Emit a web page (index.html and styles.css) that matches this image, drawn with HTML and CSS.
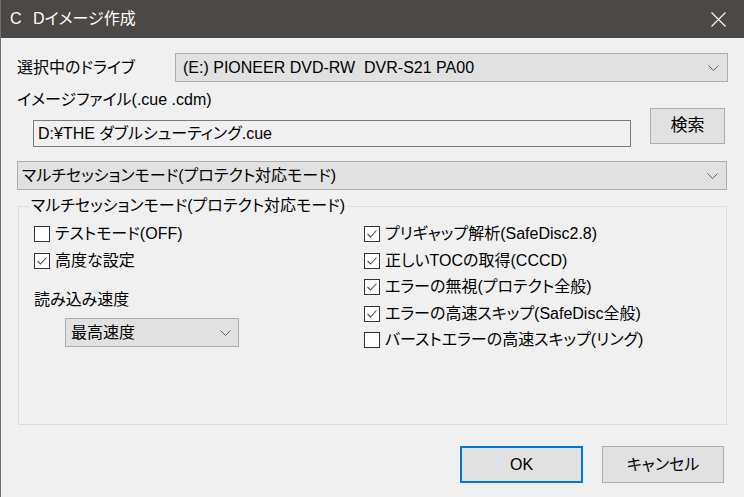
FILE: index.html
```html
<!DOCTYPE html>
<html lang="ja">
<head>
  <meta charset="UTF-8" />
  <title>CDイメージ作成</title>
  <link rel="stylesheet" href="styles.css">
</head>
<body>
  <div class="window">
    <div class="titlebar">
      <span class="title">C Dイメージ作成</span>
      <svg class="close" width="15" height="15" viewBox="0 0 15 15">
        <path d="M0.5 0.5 L14.5 14.5 M14.5 0.5 L0.5 14.5" stroke="#fff" stroke-width="1.1" fill="none"/>
      </svg>
    </div>

    <div class="content">
      <!-- drive -->
      <div class="drive-row">
        <span class="label drive-label">選択中のドライブ</span>
        <div class="combo drive-combo">
          <span class="combo-text">(E:) PIONEER DVD-RW  DVR-S21 PA00</span>
          <svg class="chevron" width="11" height="6" viewBox="0 0 11 6"><path d="M0.5 0.5 L5.5 5.5 L10.5 0.5" stroke="#606060" fill="none"/></svg>
        </div>
      </div>

      <!-- image file -->
      <div class="file-row">
        <div class="file-col">
          <div class="label">イメージファイル(.cue .cdm)</div>
          <div class="textbox">D:¥THE ダブルシューティング.cue</div>
        </div>
        <div class="btn search-btn">検索</div>
      </div>

      <div class="combo mode-combo">
        <span class="combo-text">マルチセッションモード(プロテクト対応モード)</span>
        <svg class="chevron" width="11" height="6" viewBox="0 0 11 6"><path d="M0.5 0.5 L5.5 5.5 L10.5 0.5" stroke="#606060" fill="none"/></svg>
      </div>

      <!-- group box -->
      <div class="group">
        <div class="group-title">マルチセッションモード(プロテクト対応モード)</div>
        <div class="group-cols">
          <div class="col-left">
            <div class="check"><span class="box"></span>テストモード(OFF)</div>
            <div class="check"><span class="box"><svg width="14" height="14" viewBox="0 0 14 14"><path d="M2.5 7 L5.5 10 L11.5 3.5" stroke="#4a4a4a" stroke-width="1.1" fill="none"/></svg></span>高度な設定</div>
            <div class="label speed-label">読み込み速度</div>
            <div class="combo speed-combo">
              <span class="combo-text">最高速度</span>
              <svg class="chevron" width="11" height="6" viewBox="0 0 11 6"><path d="M0.5 0.5 L5.5 5.5 L10.5 0.5" stroke="#606060" fill="none"/></svg>
            </div>
          </div>
          <div class="col-right">
            <div class="check"><span class="box"><svg width="14" height="14" viewBox="0 0 14 14"><path d="M2.5 7 L5.5 10 L11.5 3.5" stroke="#4a4a4a" stroke-width="1.1" fill="none"/></svg></span>プリギャップ解析(SafeDisc2.8)</div>
            <div class="check"><span class="box"><svg width="14" height="14" viewBox="0 0 14 14"><path d="M2.5 7 L5.5 10 L11.5 3.5" stroke="#4a4a4a" stroke-width="1.1" fill="none"/></svg></span>正しいTOCの取得(CCCD)</div>
            <div class="check"><span class="box"><svg width="14" height="14" viewBox="0 0 14 14"><path d="M2.5 7 L5.5 10 L11.5 3.5" stroke="#4a4a4a" stroke-width="1.1" fill="none"/></svg></span>エラーの無視(プロテクト全般)</div>
            <div class="check"><span class="box"><svg width="14" height="14" viewBox="0 0 14 14"><path d="M2.5 7 L5.5 10 L11.5 3.5" stroke="#4a4a4a" stroke-width="1.1" fill="none"/></svg></span>エラーの高速スキップ(SafeDisc全般)</div>
            <div class="check"><span class="box"></span>バーストエラーの高速スキップ(リング)</div>
          </div>
        </div>
      </div>

      <div class="buttons">
        <div class="btn ok-btn">OK</div>
        <div class="btn cancel-btn">キャンセル</div>
      </div>
    </div>
  </div>
</body>
</html>
```

FILE: styles.css
```css
html, body {
  margin: 0;
  padding: 0;
}

body {
  width: 744px;
  height: 497px;
  overflow: hidden;
  background: #f0f0f0;
  font-family: "Liberation Sans", "Noto Sans CJK JP", sans-serif;
  font-size: 16px;
  line-height: 20px;
  font-feature-settings: "palt";
  color: #000;
}

.window {
  height: 497px;
  border-left: 1px solid #707070;
  box-sizing: border-box;
}

/* title bar */
.titlebar {
  height: 38px;
  background: #4b4845;
  display: flex;
  align-items: center;
  justify-content: space-between;
  padding: 0 18px 0 9px;
}

.title {
  color: #fff;
  font-size: 16px;
  word-spacing: 7px;
  line-height: 20px;
}

.close {
  display: block;
}

.content {
  padding: 0 16px;
}

.label {
  line-height: 20px;
  white-space: nowrap;
}

/* combo boxes */
.combo {
  height: 29px;
  box-sizing: border-box;
  background: #e1e1e1;
  border: 1px solid #adadad;
  display: flex;
  align-items: center;
  justify-content: space-between;
  padding: 0 8px 0 7px;
}

.combo-text {
  white-space: pre;
  line-height: 20px;
}

.chevron {
  display: block;
}

.drive-row {
  margin-top: 15px;
  display: flex;
  align-items: center;
}

.drive-label {
  width: 158px;
  flex-shrink: 0;
}

.drive-combo {
  flex: 1;
}

/* image file */
.file-row {
  margin-top: 8px;
  display: flex;
  align-items: flex-start;
}

.file-col {
  flex: 1;
}

.textbox {
  margin: 10px 0 0 16px;
  height: 27px;
  box-sizing: border-box;
  border: 1px solid #7a7a7a;
  background: #f0f0f0;
  padding-left: 4px;
  line-height: 25px;
  white-space: nowrap;
}

.btn {
  box-sizing: border-box;
  background: #e1e1e1;
  border: 1px solid #adadad;
  display: flex;
  align-items: center;
  justify-content: center;
  line-height: 20px;
}

.search-btn {
  margin: 18px 3px 0 19px;
  width: 75px;
  height: 36px;
  font-size: 17px;
}

.mode-combo {
  margin: 14px 1px 0 0;
  padding-left: 4px;
}

/* group box */
.group {
  margin: 16px 1px 0 1px;
  height: 219px;
  box-sizing: border-box;
  border: 1px solid #dcdcdc;
  padding-left: 15px;
}

.group-title {
  display: table;
  margin: -11px 0 0 -5px;
  padding: 0 2px;
  line-height: 20px;
  background: #f0f0f0;
}

.group-cols {
  margin-top: 5px;
  display: grid;
  grid-template-columns: 330px 1fr;
}

.check {
  height: 26.5px;
  display: flex;
  align-items: center;
  gap: 5px;
  white-space: nowrap;
}

.box {
  width: 16px;
  height: 16px;
  box-sizing: border-box;
  border: 1px solid #333;
  background: #fff;
  display: flex;
  align-items: center;
  justify-content: center;
  flex-shrink: 0;
}

.box svg {
  display: block;
}

.speed-label {
  margin-top: 16px;
}

.speed-combo {
  margin: 8px 0 0 31px;
  width: 174px;
  padding-left: 5px;
  padding-right: 7px;
}

/* bottom buttons */
.buttons {
  margin: 21px 4px 0 0;
  display: flex;
  justify-content: flex-end;
  gap: 19px;
}

.ok-btn {
  width: 123px;
  height: 37px;
  border: 2px solid #0078d7;
}

.cancel-btn {
  width: 122px;
  height: 37px;
}
```
